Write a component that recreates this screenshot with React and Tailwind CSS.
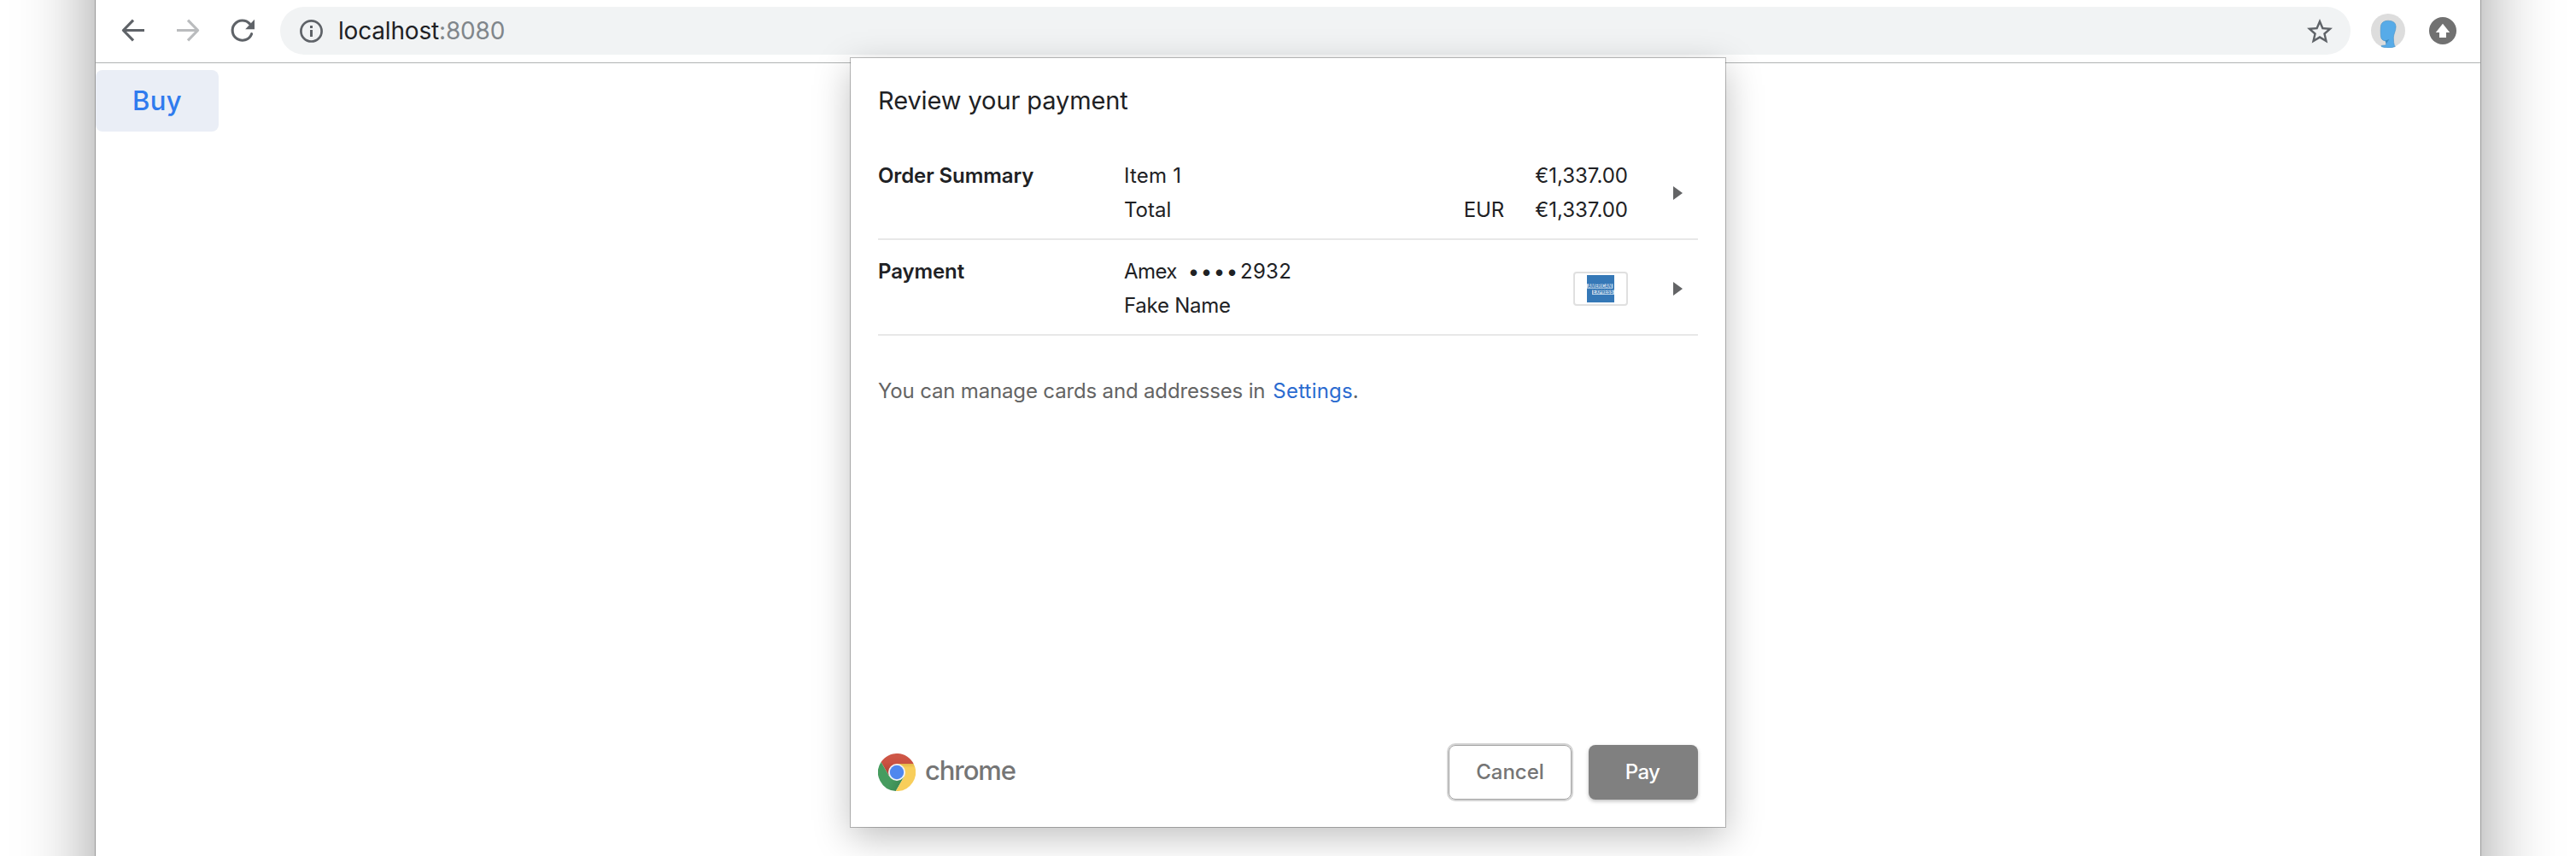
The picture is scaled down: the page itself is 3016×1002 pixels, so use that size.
import React from "react";

function BackIcon() {
  return (
    <svg className="size-10 shrink-0" viewBox="0 0 40 40" fill="none" stroke="#5f6368" strokeWidth="3.2">
      <path d="M33 19.5H9M20 7.6L8.4 19.5L20 31.4" strokeLinejoin="round" />
    </svg>
  );
}

function ForwardIcon() {
  return (
    <svg className="size-10 shrink-0" viewBox="0 0 40 40" fill="none" stroke="#babcbe" strokeWidth="3.2">
      <path d="M7 19.5H31M20 7.6L31.6 19.5L20 31.4" strokeLinejoin="round" />
    </svg>
  );
}

function ReloadIcon() {
  return (
    <svg className="size-10 shrink-0" viewBox="0 0 40 40" fill="none">
      <path
        d="M30.6 23.7A11.6 11.6 0 1 1 28.4 11.9"
        stroke="#5f6368"
        strokeWidth="3.1"
        strokeLinecap="round"
      />
      <path d="M34 6.7V18.2H23.2Z" fill="#5f6368" />
    </svg>
  );
}

function InfoIcon() {
  return (
    <svg className="size-10 shrink-0" viewBox="0 0 40 40">
      <circle cx="20.5" cy="20.4" r="12.1" fill="none" stroke="#5f6368" strokeWidth="2.7" />
      <rect x="19" y="14" width="3" height="3" fill="#5f6368" />
      <rect x="19" y="19" width="3" height="8" fill="#5f6368" />
    </svg>
  );
}

function StarIcon() {
  return (
    <svg className="mt-px size-9 shrink-0" viewBox="0 0 24 24" fill="#5f6368">
      <path d="M22 9.24l-7.19-.62L12 2 9.19 8.63 2 9.24l5.46 4.73L5.82 21 12 17.27 18.18 21l-1.63-7.03L22 9.24zM12 15.4l-3.76 2.27 1-4.28-3.32-2.88 4.38-.38L12 6.1l1.71 4.04 4.38.38-3.32 2.88 1 4.28L12 15.4z" />
    </svg>
  );
}

function Avatar() {
  return (
    <svg className="size-10 shrink-0" viewBox="0 0 40 40">
      <circle cx="20" cy="20" r="20" fill="#dddddd" />
      <path
        d="M11.8 13Q13.5 8.4 20 8.2Q28.8 8.2 29.1 15C29.2 20 26.3 24 26.3 28L26.6 33.5Q27 37 28.3 38.5Q24.5 40 20 40Q15.5 40 12.2 38.6V37.4L17.6 36.8V32.2Q13 31.5 12 28.8Q11.1 26 11.2 20Q11.2 15 11.8 13Z"
        fill="#57abe8"
        stroke="#4690c6"
        strokeWidth="0.6"
      />
      <path d="M16.5 31.6L21.4 30L18 35Z" fill="#3f8cc2" />
    </svg>
  );
}

function UpdateIcon() {
  return (
    <svg className="size-8 shrink-0" viewBox="0 0 32 32">
      <circle cx="16" cy="16" r="16" fill="#717171" />
      <path d="M16 7.8L24.2 18H20V24H12V18H7.8Z" fill="#fff" />
    </svg>
  );
}

function Chevron() {
  return (
    <svg className="ml-[53px] h-4 w-[11px] shrink-0" viewBox="0 0 11 16">
      <path d="M0 0L11 8L0 16Z" fill="#636466" />
    </svg>
  );
}

function AmexCard() {
  return (
    <div className="flex h-10 w-16 items-center justify-center rounded border-2 border-[#e0e0e0] bg-white">
      <svg className="size-8" viewBox="0 0 32 32">
        <rect width="32" height="32" fill="#3578b7" />
        <rect x="0" y="10.3" width="30.3" height="5.4" fill="#c3d8ea" />
        <rect x="6" y="17.5" width="26" height="5.4" fill="#c3d8ea" />
        <text x="1" y="15.1" textLength="28" lengthAdjust="spacingAndGlyphs" fontSize="5.6" fontWeight="700" fontFamily="Inter, sans-serif" fill="#3578b7">
          AMERICAN
        </text>
        <text x="7" y="22.3" textLength="23.6" lengthAdjust="spacingAndGlyphs" fontSize="5.6" fontWeight="700" fontFamily="Inter, sans-serif" fill="#3578b7">
          EXPRESS
        </text>
      </svg>
    </div>
  );
}

function ChromeLogo() {
  return (
    <svg className="size-11 shrink-0" viewBox="0 0 44 44">
      <defs>
        <linearGradient id="red" x1="0" y1="0" x2="0" y2="1">
          <stop offset="0" stopColor="#cf5848" />
          <stop offset="0.4" stopColor="#cb5141" />
          <stop offset="1" stopColor="#a83c30" />
        </linearGradient>
        <linearGradient id="yellow" x1="0" y1="0" x2="0" y2="1">
          <stop offset="0" stopColor="#e3b647" />
          <stop offset="0.15" stopColor="#f8ce5b" />
        </linearGradient>
        <linearGradient id="green" x1="0" y1="0.3" x2="1" y2="0.8">
          <stop offset="0.5" stopColor="#469c5f" />
          <stop offset="1" stopColor="#3a8450" />
        </linearGradient>
      </defs>
      <path d="M41.6 12A22 22 0 0 0 3.55 10L13.34 27L22 22V12Z" fill="url(#red)" />
      <path d="M3.55 10A22 22 0 0 0 20.85 44L30.66 27L22 22L13.34 27Z" fill="url(#green)" />
      <path d="M20.85 44A22 22 0 0 0 41.6 12H22V22L30.66 27Z" fill="url(#yellow)" />
      <circle cx="22" cy="22" r="10" fill="#f3f3f5" />
      <circle cx="22" cy="22" r="8.2" fill="#4f87ee" />
    </svg>
  );
}

function Toolbar() {
  return (
    <div className="flex h-[74px] items-start border-b border-[#b0b3b3] bg-white pt-2 pr-7 pl-6">
      <div className="flex h-14 w-full items-center">
        <div className="flex gap-6">
          <BackIcon />
          <ForwardIcon />
          <ReloadIcon />
        </div>
        <div className="ml-6 flex h-14 flex-1 items-center rounded-full bg-[#f1f3f4] pr-[18px] pl-4">
          <InfoIcon />
          <div className="ml-3 flex-1 text-[28px] leading-[56px] tracking-[-0.18px] text-[#202124]">
            localhost<span className="text-[#80868b]">:8080</span>
          </div>
          <StarIcon />
        </div>
        <div className="ml-6 flex items-center gap-7">
          <Avatar />
          <UpdateIcon />
        </div>
      </div>
    </div>
  );
}

function Row({ label, children }) {
  return (
    <div className="flex h-28 border-b-2 border-[#e8e8e8] pt-[17px] pb-[13px] text-2xl leading-10">
      <div className="w-72 font-semibold tracking-[-0.1px]">{label}</div>
      <div className="flex flex-1 items-center pr-[18px]">
        {children}
        <Chevron />
      </div>
    </div>
  );
}

function PaymentDialog() {
  return (
    <div className="absolute top-[68px] left-[996px] flex h-[900px] w-[1024px] flex-col bg-white px-8 pt-[30px] pb-8 text-[#202124] shadow-[0_0_0_1px_rgba(0,0,0,0.25),0_12px_40px_rgba(0,0,0,0.25)]">
      <h1 className="mb-[31px] text-[29px] leading-10 tracking-[-0.1px]">Review your payment</h1>
      <Row label="Order Summary">
        <div className="flex-1">
          <div className="flex justify-between">
            <span className="tracking-[0.2px]">Item 1</span>
            <span>€1,337.00</span>
          </div>
          <div className="flex">
            <span className="flex-1">Total</span>
            <span className="tracking-[-0.2px]">EUR</span>
            <span className="w-[145px] text-right">€1,337.00</span>
          </div>
        </div>
      </Row>
      <Row label="Payment">
        <div className="flex-1">
          <div className="flex">
            <span className="w-[74px] tracking-[-0.6px]">Amex</span>
            <span className="flex w-[62px]">
              <span className="w-[15px] text-center">•</span>
              <span className="w-[15px] text-center">•</span>
              <span className="w-[15px] text-center">•</span>
              <span className="w-[15px] text-center">•</span>
            </span>
            <span className="tracking-[0.3px]">2932</span>
          </div>
          <div className="tracking-[-0.25px]">Fake Name</div>
        </div>
        <AmexCard />
      </Row>
      <p className="mt-[45px] flex text-2xl leading-10 text-[#646464]">
        <span className="tracking-[-0.16px]">You can manage cards and addresses in</span>
        <a className="ml-[9px] tracking-[0.2px] text-[#2b6bd0]">Settings</a>
        <span>.</span>
      </p>
      <div className="mt-auto flex h-16 items-center">
        <ChromeLogo />
        <span className="ml-[11px] flex-1 pb-[5px] text-[31px] leading-10 font-medium tracking-[-1.1px] text-[#757575]">chrome</span>
        <button className="h-16 w-36 rounded-lg border border-[#a2a2a2] text-2xl font-medium text-[#757575] shadow-[0_0_0_2px_#d4d4d4]">
          Cancel
        </button>
        <button className="ml-5 h-16 w-32 rounded-lg bg-[#808080] pr-1.5 pl-1 text-2xl font-medium tracking-[-0.6px] text-white shadow-[0_2px_4px_rgba(0,0,0,0.25)]">
          Pay
        </button>
      </div>
    </div>
  );
}

export default function App() {
  return (
    <div className="relative h-[1002px] w-[3016px] overflow-hidden bg-white font-[Inter,'Noto_Sans',sans-serif]">
      <div className="-my-[200px] mr-28 ml-28 h-[1402px] bg-white py-[200px] shadow-[0_0_0_1px_rgba(0,0,0,0.25),0_0_84px_rgba(0,0,0,0.4)]">
        <Toolbar />
        <button className="mt-2 block h-[72px] w-36 rounded-lg bg-[#eaeef6] text-[31px] leading-[72px] font-medium tracking-[0.4px] text-[#2f7bee]">
          Buy
        </button>
      </div>
      <PaymentDialog />
    </div>
  );
}
